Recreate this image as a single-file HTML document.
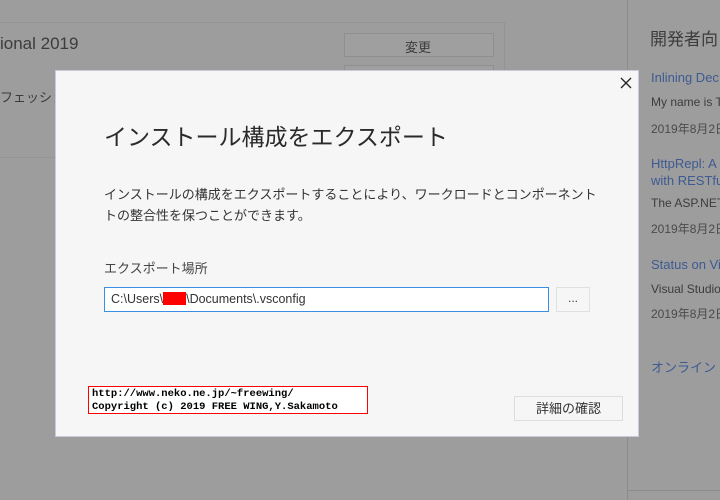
<!DOCTYPE html>
<html><head><meta charset="utf-8"><style>
*{margin:0;padding:0;box-sizing:border-box}
body{width:720px;height:500px;overflow:hidden;background:#9d9d9d;position:relative;font-family:"Liberation Sans","Noto Sans CJK JP",sans-serif;color:#3c3c3c}
.a{position:absolute;white-space:nowrap}
.card{position:absolute;left:-2px;top:22px;width:507px;height:136px;border:1px solid #949494;border-left:none}
.btn{position:absolute;border:1px solid #8f8f8f;background:#9f9f9f}
.link{color:#3d5a92}
.dlg{position:absolute;left:55px;top:70px;width:584px;height:367px;background:#f6f6f6;border:1px solid #c9c9dc}
</style></head><body>
<div class="card"></div>
<div class="a" style="left:0;top:157px;width:505px;height:1px;background:#949494"></div>
<div class="a" style="left:0;top:34px;font-size:17px;color:#3c3c3c">ional 2019</div>
<div class="a" style="left:0;top:87px;font-size:13px">フェッショ</div>
<div class="btn" style="left:344px;top:33px;width:150px;height:24px"></div>
<div class="a" style="left:405px;top:37px;font-size:13px">変更</div>
<div class="btn" style="left:344px;top:65px;width:150px;height:10px"></div>
<div class="a" style="left:627px;top:0;width:1px;height:500px;background:#8c8c8c"></div>
<div class="a" style="left:627px;top:490px;width:93px;height:1px;background:#8c8c8c"></div>
<div class="a" style="left:650px;top:25px;font-size:17px">開発者向</div>
<div class="a link" style="left:651px;top:70px;font-size:13px">Inlining Dec</div>
<div class="a" style="left:651px;top:95px;font-size:12px">My name is T</div>
<div class="a" style="left:651px;top:120px;font-size:12px;color:#4a4a4a">2019年8月2日</div>
<div class="a link" style="left:651px;top:155px;font-size:13px;line-height:17px">HttpRepl: A<br>with RESTful</div>
<div class="a" style="left:651px;top:196px;font-size:12px">The ASP.NET</div>
<div class="a" style="left:651px;top:220px;font-size:12px;color:#4a4a4a">2019年8月2日</div>
<div class="a link" style="left:651px;top:257px;font-size:13px">Status on Vi</div>
<div class="a" style="left:651px;top:282px;font-size:12px">Visual Studio</div>
<div class="a" style="left:651px;top:305px;font-size:12px;color:#4a4a4a">2019年8月2日</div>
<div class="a link" style="left:651px;top:357px;font-size:13px">オンライン</div>

<div class="dlg"></div>
<svg class="a" style="left:620px;top:77px" width="12" height="12" viewBox="0 0 12 12"><path d="M1 1L11 11M11 1L1 11" stroke="#222" stroke-width="1.3"/></svg>
<div class="a" style="left:104px;top:118px;font-size:23px;color:#2a2a2a">インストール構成をエクスポート</div>
<div class="a" style="left:104px;top:184px;font-size:13px;line-height:21px;color:#333">インストールの構成をエクスポートすることにより、ワークロードとコンポーネント<br>トの整合性を保つことができます。</div>
<div class="a" style="left:104px;top:258px;font-size:13px;color:#444">エクスポート場所</div>
<div class="a" style="left:104px;top:287px;width:445px;height:25px;border:1px solid #3a8ee6;background:#fff"></div>
<div class="a" style="left:111px;top:292px;font-size:12.5px;color:#333">C:\Users\<span style="display:inline-block;width:23px;height:13px;background:#f00;vertical-align:-2px"></span>\Documents\.vsconfig</div>
<div class="a" style="left:556px;top:287px;width:34px;height:25px;border:1px solid #e0e0e0;background:#f6f6f6;font-size:12px;text-align:center;line-height:20px">...</div>
<div class="a" style="left:514px;top:396px;width:109px;height:25px;border:1px solid #ddd;background:#f6f6f6;font-size:13px;text-align:center;line-height:23px;color:#333">詳細の確認</div>
<div class="a" style="left:88px;top:386px;width:280px;height:28px;border:1px solid #f00;background:#fff;font-family:'Liberation Mono',monospace;font-weight:bold;font-size:10.5px;line-height:13px;padding:1px 0 0 3px;color:#000">http://www.neko.ne.jp/~freewing/<br>Copyright (c) 2019 FREE WING,Y.Sakamoto</div>
</body></html>
